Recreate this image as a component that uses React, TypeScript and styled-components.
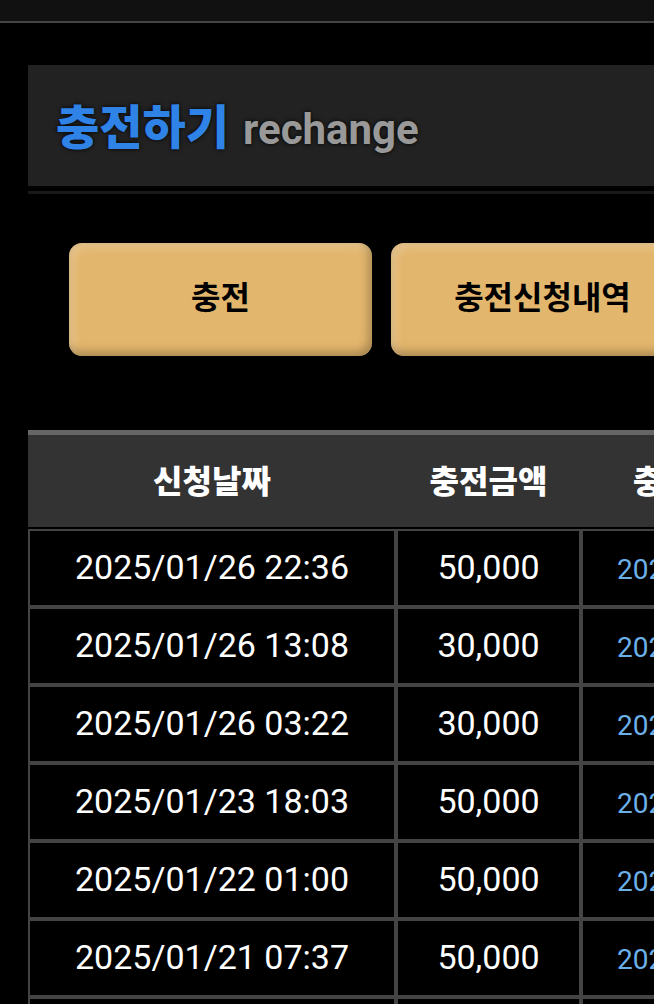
import React from 'react';
import styled, { createGlobalStyle } from 'styled-components';

const GlobalStyle = createGlobalStyle`
  * {
    box-sizing: border-box;
  }
  body {
    margin: 0;
    background: #000;
    color: #fff;
    font-family: Roboto, 'Noto Sans CJK KR', sans-serif;
    overflow: hidden;
  }
`;

const TopBar = styled.header`
  height: 23px;
  background: #111;
  border-bottom: 2px solid #444;
`;

const Content = styled.main`
  padding: 42px 0 0 28px;
`;

const TitleBar = styled.div`
  padding: 5px 28px 0;
  background: #222;
  box-shadow: 0 5px 0 #000, 0 8px 0 #19191a;
`;

const Title = styled.h1`
  display: flex;
  align-items: baseline;
  gap: 14px;
  margin: 0;
  color: #2f82e6;
  font-size: 47px;
  line-height: 116px;
  font-weight: 900;
  white-space: nowrap;
  text-shadow: 0 0 4px #000;
`;

const SubTitle = styled.small`
  color: #999;
  font-size: 42px;
  font-weight: 700;
  line-height: 48px;
`;

const ButtonRow = styled.div`
  display: flex;
  gap: 19px;
  padding: 57px 0 0 41px;
`;

const MenuButton = styled.button`
  flex: none;
  width: 303px;
  height: 113px;
  padding: 0 0 10px;
  border: 0;
  border-radius: 13px;
  background: #e3b66d;
  color: #000;
  font-family: inherit;
  font-size: 32px;
  font-weight: 700;
  white-space: nowrap;
  cursor: pointer;
  box-shadow: inset -3px -4px 10px rgba(90, 70, 40, 0.45),
    inset 4px 4px 10px rgba(240, 220, 190, 0.5);
`;

const HistoryTable = styled.table`
  margin-top: 74px;
  border-collapse: separate;
  border-spacing: 0;
  white-space: nowrap;
`;

const HeadCell = styled.th<{ $width: number; $left?: boolean }>`
  min-width: ${(props) => props.$width}px;
  height: 99px;
  padding: ${(props) => (props.$left ? '2px 52px 0' : '2px 0 0')};
  border-top: 5px solid #666;
  border-bottom: 2px solid #000;
  background: #333;
  background-clip: padding-box;
  font-size: 32px;
  font-weight: 900;
  line-height: 90px;
  text-align: ${(props) => (props.$left ? 'left' : 'center')};
  vertical-align: top;
`;

const Cell = styled.td<{ $left?: boolean }>`
  height: 78px;
  padding: ${(props) => (props.$left ? '0 34px' : '0')};
  border: 2px solid #444;
  font-size: 34px;
  line-height: 72px;
  text-align: ${(props) => (props.$left ? 'left' : 'center')};
  vertical-align: top;
`;

const DoneDate = styled.span`
  color: #6cb0ea;
  font-size: 28px;
  line-height: 32px;
`;

const rows = [
  { date: '2025/01/26 22:36', amount: '50,000' },
  { date: '2025/01/26 13:08', amount: '30,000' },
  { date: '2025/01/26 03:22', amount: '30,000' },
  { date: '2025/01/23 18:03', amount: '50,000' },
  { date: '2025/01/22 01:00', amount: '50,000' },
  { date: '2025/01/21 07:37', amount: '50,000' },
  { date: '', amount: '' },
];

const App = () => {
  return (
    <>
      <GlobalStyle />
      <TopBar />
      <Content>
        <TitleBar>
          <Title>
            충전하기
            <SubTitle>rechange</SubTitle>
          </Title>
        </TitleBar>
        <ButtonRow>
          <MenuButton type="button">충전</MenuButton>
          <MenuButton type="button">충전신청내역</MenuButton>
        </ButtonRow>
        <HistoryTable>
          <thead>
            <tr>
              <HeadCell $width={368}>신청날짜</HeadCell>
              <HeadCell $width={185}>충전금액</HeadCell>
              <HeadCell $width={300} $left>
                충전날짜
              </HeadCell>
            </tr>
          </thead>
          <tbody>
            {rows.map((row, index) => (
              <tr key={index}>
                <Cell>{row.date}</Cell>
                <Cell>{row.amount}</Cell>
                <Cell $left>
                  <DoneDate>{row.date}</DoneDate>
                </Cell>
              </tr>
            ))}
          </tbody>
        </HistoryTable>
      </Content>
    </>
  );
};
export default App;
